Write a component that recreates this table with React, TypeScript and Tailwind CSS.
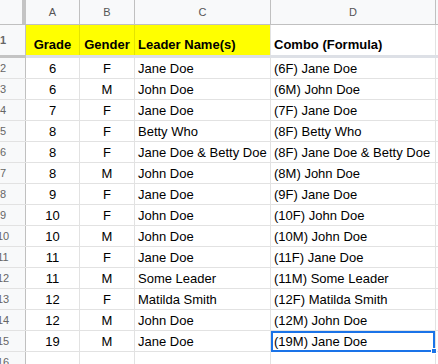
const rows = [
  { n: 2, grade: "6", gender: "F", leader: "Jane Doe" },
  { n: 3, grade: "6", gender: "M", leader: "John Doe" },
  { n: 4, grade: "7", gender: "F", leader: "Jane Doe" },
  { n: 5, grade: "8", gender: "F", leader: "Betty Who" },
  { n: 6, grade: "8", gender: "F", leader: "Jane Doe & Betty Doe" },
  { n: 7, grade: "8", gender: "M", leader: "John Doe" },
  { n: 8, grade: "9", gender: "F", leader: "Jane Doe" },
  { n: 9, grade: "10", gender: "F", leader: "John Doe" },
  { n: 10, grade: "10", gender: "M", leader: "John Doe" },
  { n: 11, grade: "11", gender: "F", leader: "Jane Doe" },
  { n: 12, grade: "11", gender: "M", leader: "Some Leader" },
  { n: 13, grade: "12", gender: "F", leader: "Matilda Smith" },
  { n: 14, grade: "12", gender: "M", leader: "John Doe" },
  { n: 15, grade: "19", gender: "M", leader: "Jane Doe" },
];

function RowNum({ n }: { n: number }) {
  return (
    <div className="w-[26px] shrink-0 overflow-hidden bg-[#f8f9fa] border-r border-[#c0c0c0] flex items-center">
      <div className="w-[46px] -ml-[20px] shrink-0 text-center text-[11px] text-[#666]">{n}</div>
    </div>
  );
}

export default function App() {
  return (
    <div className="w-[438px] h-[364px] overflow-hidden bg-white text-black font-['Liberation_Sans',Arial,sans-serif]">
      {/* Column headers */}
      <div className="flex h-[25px] border-b border-[#c0c0c0] bg-[#f8f9fa] text-[11px] text-[#555]">
        <div className="w-[26px] shrink-0 flex">
          <div className="w-[22px]" />
          <div className="w-[4px] bg-[#c4c4c4]" />
        </div>
        <div className="w-[54px] shrink-0 border-r border-[#c0c0c0] flex items-center justify-center">A</div>
        <div className="w-[55px] shrink-0 border-r border-[#c0c0c0] flex items-center justify-center">B</div>
        <div className="w-[136px] shrink-0 border-r border-[#c0c0c0] flex items-center justify-center">C</div>
        <div className="w-[165px] shrink-0 border-r border-[#c0c0c0] flex items-center justify-center">D</div>
        <div className="flex-1" />
      </div>

      {/* Row 1: headings */}
      <div className="flex h-[30px] text-[13px] leading-[15px] font-bold">
        <RowNum n={1} />
        <div className="w-[54px] shrink-0 bg-[#ffff00] border-r border-[#e4e400] flex items-end justify-center pb-[3px]">Grade</div>
        <div className="w-[55px] shrink-0 bg-[#ffff00] border-r border-[#e4e400] flex items-end justify-center pb-[3px]">Gender</div>
        <div className="w-[136px] shrink-0 bg-[#ffff00] border-r border-[#e2e2e2] flex items-end pl-[3px] pb-[3px] whitespace-nowrap">Leader Name(s)</div>
        <div className="w-[165px] shrink-0 border-r border-[#e2e2e2] flex items-end pl-[3px] pb-[3px] whitespace-nowrap">Combo (Formula)</div>
        <div className="flex-1" />
      </div>

      {/* Frozen row divider */}
      <div className="flex h-[3px]">
        <div className="w-[26px] bg-[#c4c4c4]" />
        <div className="flex-1 bg-[#dde0e6]" />
      </div>

      {/* Data rows */}
      {rows.map((r) => (
        <div key={r.n} className="flex h-[21px] border-b border-[#e2e2e2] text-[13px] leading-[15px]">
          <RowNum n={r.n} />
          <div className="w-[54px] shrink-0 border-r border-[#e2e2e2] flex items-end justify-center pb-[2px]">{r.grade}</div>
          <div className="w-[55px] shrink-0 border-r border-[#e2e2e2] flex items-end justify-center pb-[2px]">{r.gender}</div>
          <div className="w-[136px] shrink-0 border-r border-[#e2e2e2] flex items-end pl-[3px] pb-[2px] whitespace-nowrap">{r.leader}</div>
          <div className="relative w-[165px] shrink-0 border-r border-[#e2e2e2] flex items-end pl-[3px] pb-[2px] whitespace-nowrap">
            ({r.grade}{r.gender}) {r.leader}
            {r.n === 15 && (
              <div className="absolute left-0 top-0 right-0 -bottom-px border-2 border-[#1a73e8]">
                <div className="absolute -right-[4px] -bottom-[4px] w-[6px] h-[6px] bg-[#1a73e8] border border-white" />
              </div>
            )}
          </div>
          <div className="flex-1" />
        </div>
      ))}

      {/* Row 16 (partially visible) */}
      <div className="flex h-[21px] border-b border-[#e2e2e2]">
        <RowNum n={16} />
        <div className="w-[54px] shrink-0 border-r border-[#e2e2e2]" />
        <div className="w-[55px] shrink-0 border-r border-[#e2e2e2]" />
        <div className="w-[136px] shrink-0 border-r border-[#e2e2e2]" />
        <div className="w-[165px] shrink-0 border-r border-[#e2e2e2]" />
        <div className="flex-1" />
      </div>
    </div>
  );
}
